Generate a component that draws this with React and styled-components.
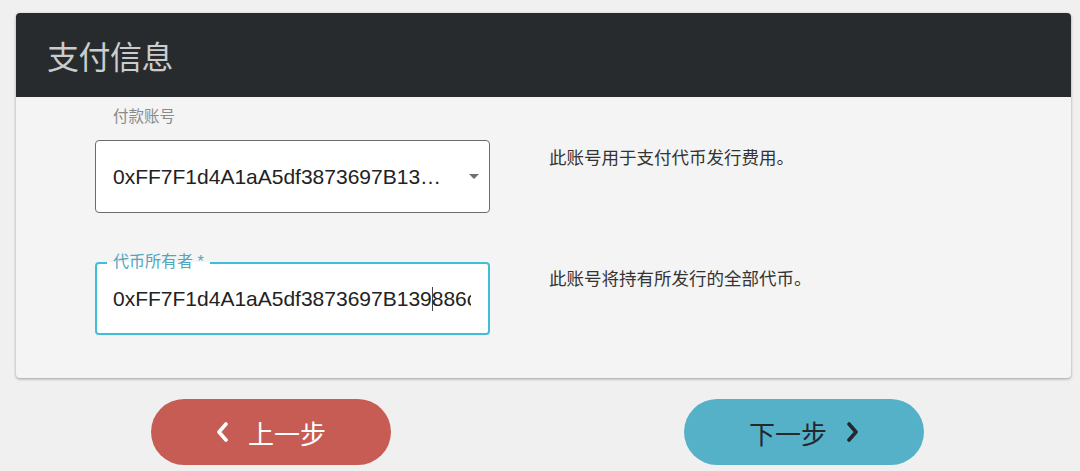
import React from 'react'
import styled, { createGlobalStyle } from 'styled-components'

const GlobalStyle = createGlobalStyle`
  body {
    margin: 0;
    background: #f0f0f0;
    font-family: "Liberation Sans", "Noto Sans CJK SC", sans-serif;
  }
`

const cjk = `"Liberation Sans", "Noto Sans CJK SC", sans-serif`

function App() {
  return (
    <Page>
      <GlobalStyle />
      <Card>
        <CardHeader>
          <Title>支付信息</Title>
        </CardHeader>
        <CardBody>
          <Row>
            <FieldColumn>
              <OuterLabel>付款账号</OuterLabel>
              <SelectBox>
                <Value>0xFF7F1d4A1aA5df3873697B13…</Value>
                <Arrow />
              </SelectBox>
            </FieldColumn>
            <Help $offset={39}>此账号用于支付代币发行费用。</Help>
          </Row>
          <Row $gap={49}>
            <FieldColumn>
              <InputBox>
                <NotchLabel>代币所有者 *</NotchLabel>
                <Clip>
                  0xFF7F1d4A1aA5df3873697B139<Caret />886c1E5d4F1C
                </Clip>
              </InputBox>
            </FieldColumn>
            <Help $offset={5}>此账号将持有所发行的全部代币。</Help>
          </Row>
        </CardBody>
      </Card>
      <Actions>
        <StepButton $tone="back">
          <Chevron viewBox="0 0 12 20"><path d="M10 2 L3 10 L10 18" /></Chevron>
          上一步
        </StepButton>
        <StepButton $tone="next">
          下一步
          <Chevron viewBox="0 0 12 20"><path d="M2 2 L9 10 L2 18" /></Chevron>
        </StepButton>
      </Actions>
    </Page>
  )
}

export default App

const Page = styled.div`
  padding: 13px 9px 0 16px;
`

const Card = styled.div`
  background: #f4f4f4;
  border-radius: 4px;
  overflow: hidden;
  box-shadow: 0 1px 3px rgba(0, 0, 0, 0.35);
`

const CardHeader = styled.div`
  height: 84px;
  background: #272b2e;
  display: flex;
  align-items: center;
  padding-left: 31px;
`

const Title = styled.h1`
  margin: 0;
  font-family: ${cjk};
  font-size: 32px;
  font-weight: 400;
  color: #cbcccd;
  letter-spacing: -0.5px;
`

const CardBody = styled.div`
  padding: 10px 0 43px 79px;
`

const Row = styled.div`
  display: flex;
  margin-top: ${p => p.$gap || 0}px;
`

const FieldColumn = styled.div`
  width: 395px;
  flex: none;
`

const OuterLabel = styled.div`
  height: 20px;
  line-height: 20px;
  margin: 0 0 13px 18px;
  font-family: ${cjk};
  font-size: 15.5px;
  color: #8a8a8a;
`

const SelectBox = styled.div`
  box-sizing: border-box;
  height: 73px;
  border: 1px solid #6b6b6b;
  border-radius: 4px;
  background: #fff;
  display: flex;
  align-items: center;
  padding: 0 10px 0 17px;
`

const Value = styled.div`
  flex: 1;
  font-size: 21px;
  color: #222;
  white-space: nowrap;
  overflow: hidden;
`

const Arrow = styled.span`
  width: 0;
  height: 0;
  border-left: 5px solid transparent;
  border-right: 5px solid transparent;
  border-top: 5px solid #707070;
`

const InputBox = styled.div`
  position: relative;
  box-sizing: border-box;
  height: 73px;
  border: 2px solid #3dbfdc;
  border-radius: 4px;
  background: #fff;
  display: flex;
  align-items: center;
  padding: 0 17px 0 16px;
`

const NotchLabel = styled.span`
  position: absolute;
  top: -11px;
  left: 10px;
  padding: 0 6px;
  line-height: 18px;
  font-family: ${cjk};
  font-size: 16px;
  color: #4ea6c2;
  background: linear-gradient(#f4f4f4 50%, #fff 50%);
`

const Clip = styled.div`
  flex: 1;
  overflow: hidden;
  white-space: nowrap;
  font-size: 21px;
  color: #222;
`

const Caret = styled.span`
  display: inline-block;
  width: 1px;
  height: 24px;
  margin: 0 -1px 0 0;
  vertical-align: -5px;
  background: #444;
`

const Help = styled.p`
  margin: ${p => p.$offset}px 0 0 59px;
  line-height: 24px;
  font-family: ${cjk};
  font-size: 17.5px;
  color: #333;
`

const Actions = styled.div`
  display: flex;
  gap: 293px;
  padding: 21px 0 0 135px;
`

const StepButton = styled.button`
  width: 240px;
  height: 66px;
  border: none;
  border-radius: 33px;
  display: flex;
  align-items: center;
  justify-content: center;
  gap: 20px;
  font-family: ${cjk};
  font-size: 26px;
  background: ${p => (p.$tone === 'back' ? '#c75c55' : '#55b1c7')};
  color: ${p => (p.$tone === 'back' ? '#fff' : '#24282b')};
  cursor: pointer;
`

const Chevron = styled.svg`
  width: 12px;
  height: 20px;
  fill: none;
  stroke: currentColor;
  stroke-width: 3.6;
  stroke-linecap: round;
  stroke-linejoin: round;
`
